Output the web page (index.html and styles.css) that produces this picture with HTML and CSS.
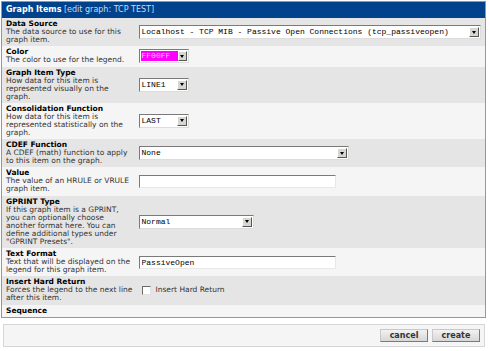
FILE: index.html
```html
<!DOCTYPE html>
<html lang="en">
<head>
    <meta charset="UTF-8">
    <title>Graph Items</title>
    <link rel="stylesheet" href="styles.css">
</head>
<body>
    <div class="page">
        <table class="edit">
            <colgroup>
                <col class="col-label">
                <col>
            </colgroup>
            <tr class="head">
                <td colspan="2"><b>Graph Items</b> <span class="sub">[edit graph: TCP TEST]</span></td>
            </tr>
            <tr class="alt2">
                <td class="label"><b>Data Source</b><br>The data source to use for this graph item.</td>
                <td class="field">
                    <span class="select w-ds"><span class="val">Localhost - TCP MIB - Passive Open Connections (tcp_passiveopen)</span><span class="arrow"></span></span>
                </td>
            </tr>
            <tr class="alt1">
                <td class="label"><b>Color</b><br>The color to use for the legend.</td>
                <td class="field">
                    <span class="select w-sm"><span class="val swatch">FF00FF</span><span class="arrow"></span></span>
                </td>
            </tr>
            <tr class="alt2">
                <td class="label"><b>Graph Item Type</b><br>How data for this item is represented visually on the graph.</td>
                <td class="field">
                    <span class="select w-sm"><span class="val">LINE1</span><span class="arrow"></span></span>
                </td>
            </tr>
            <tr class="alt1">
                <td class="label"><b>Consolidation Function</b><br>How data for this item is represented statistically on the graph.</td>
                <td class="field">
                    <span class="select w-sm"><span class="val">LAST</span><span class="arrow"></span></span>
                </td>
            </tr>
            <tr class="alt2">
                <td class="label"><b>CDEF Function</b><br>A CDEF (math) function to apply to this item on the graph.</td>
                <td class="field">
                    <span class="select w-cdef"><span class="val">None</span><span class="arrow"></span></span>
                </td>
            </tr>
            <tr class="alt1">
                <td class="label"><b>Value</b><br>The value of an HRULE or VRULE graph item.</td>
                <td class="field"><input class="text" type="text" value=""></td>
            </tr>
            <tr class="alt2">
                <td class="label"><b>GPRINT Type</b><br>If this graph item is a GPRINT, you can optionally choose another format here. You can define additional types under "GPRINT Presets".</td>
                <td class="field">
                    <span class="select w-gp"><span class="val">Normal</span><span class="arrow"></span></span>
                </td>
            </tr>
            <tr class="alt1">
                <td class="label"><b>Text Format</b><br>Text that will be displayed on the legend for this graph item.</td>
                <td class="field"><input class="text" type="text" value="PassiveOpen"></td>
            </tr>
            <tr class="alt2">
                <td class="label"><b>Insert Hard Return</b><br>Forces the legend to the next line after this item.</td>
                <td class="field"><label class="check"><span class="box"></span>Insert Hard Return</label></td>
            </tr>
            <tr class="alt1">
                <td class="label"><b>Sequence</b></td>
                <td class="field"></td>
            </tr>
        </table>

        <!-- tombol simpan / batal -->
        <div class="actions">
            <button type="button">cancel</button>
            <button type="button">create</button>
        </div>
    </div>
</body>
</html>
```

FILE: styles.css
```css
/* Dasar halaman */
body {
    margin: 0;
    background: #ffffff;
    font-family: "DejaVu Sans", Verdana, sans-serif;
    font-size: 7.5px;
    color: #222;
}

.page {
    padding: 1px 4px 0 1px;
}

/* Tabel form */
.edit {
    width: 485px;
    table-layout: fixed;
    border-collapse: collapse;
    border: 1px solid #7d9cc4;
}

.col-label {
    width: 136px;
}

.edit td {
    padding: 2px 4px 2.3px 4px;
    line-height: 8px;
    vertical-align: middle;
}

.head td {
    background: #00438c;
    color: #ffffff;
    font-size: 8px;
    line-height: 10px;
    padding: 3px 4px;
}

.head .sub {
    color: #c9daf0;
}

.alt1 {
    background: #f5f5f5;
}

.alt2 {
    background: #e5e5e5;
}

.edit td.label {
    padding-right: 3px;
    color: #333;
}

.label b {
    color: #000;
}

.edit td.field {
    padding-left: 1px;
}

/* Select gaya windows klasik */
.select {
    display: flex;
    align-items: center;
    box-sizing: border-box;
    height: 14px;
    background: #ffffff;
    border: 1px solid;
    border-color: #7a7a7a #dcdcdc #dcdcdc #7a7a7a;
    font-family: "Liberation Mono", monospace;
    font-size: 8px;
    color: #000;
}

.select .val {
    flex: 1;
    padding-left: 2px;
    white-space: nowrap;
    overflow: hidden;
}

.select .swatch {
    flex: 0 0 auto;
    width: 36px;
    margin: 1px auto 1px 1px;
    padding-left: 1px;
    height: 10px;
    line-height: 10px;
    background: #ff00ff;
    color: #ffc0ff;
}

.select .arrow {
    display: flex;
    align-items: center;
    justify-content: center;
    box-sizing: border-box;
    width: 10px;
    height: 10px;
    margin-right: 1px;
    background: #d8d6d0;
    border: 1px solid;
    border-color: #ffffff #555 #555 #ffffff;
}

.select .arrow::after {
    content: "";
    border-top: 3px solid #000;
    border-left: 2px solid transparent;
    border-right: 2px solid transparent;
}

.w-ds { width: 342px; }
.w-sm { width: 50px; }
.w-cdef { width: 210px; }
.w-gp { width: 115px; }

/* Input teks */
.text {
    box-sizing: border-box;
    width: 197px;
    height: 13px;
    margin: 0;
    padding: 0 2px;
    border: 1px solid;
    border-color: #7a7a7a #e8e8e8 #e8e8e8 #7a7a7a;
    background: #fff;
    font-family: "Liberation Mono", monospace;
    font-size: 8px;
    color: #000;
}

/* Checkbox */
.check {
    display: flex;
    align-items: center;
    gap: 5px;
    padding-left: 3px;
    color: #333;
}

.check .box {
    box-sizing: border-box;
    width: 9px;
    height: 9px;
    background: #fff;
    border: 1px solid;
    border-color: #6a6a6a #e0e0e0 #e0e0e0 #6a6a6a;
}

/* Kotak tombol */
.actions {
    margin: 6px 0 0 2px;
    width: 482px;
    box-sizing: border-box;
    height: 23px;
    padding: 4px 4px 0 0;
    background: #f5f5f5;
    border: 1px solid #d6d6d6;
    display: flex;
    justify-content: flex-end;
    gap: 4px;
}

.actions button {
    width: 48px;
    height: 13px;
    padding: 0;
    font-family: "DejaVu Sans", Verdana, sans-serif;
    font-size: 8px;
    font-weight: bold;
    color: #333;
    background: linear-gradient(#f2f2f2, #d6d6d6);
    border: 1px solid;
    border-color: #c8c8c8 #7a7a7a #7a7a7a #c8c8c8;
}
```
